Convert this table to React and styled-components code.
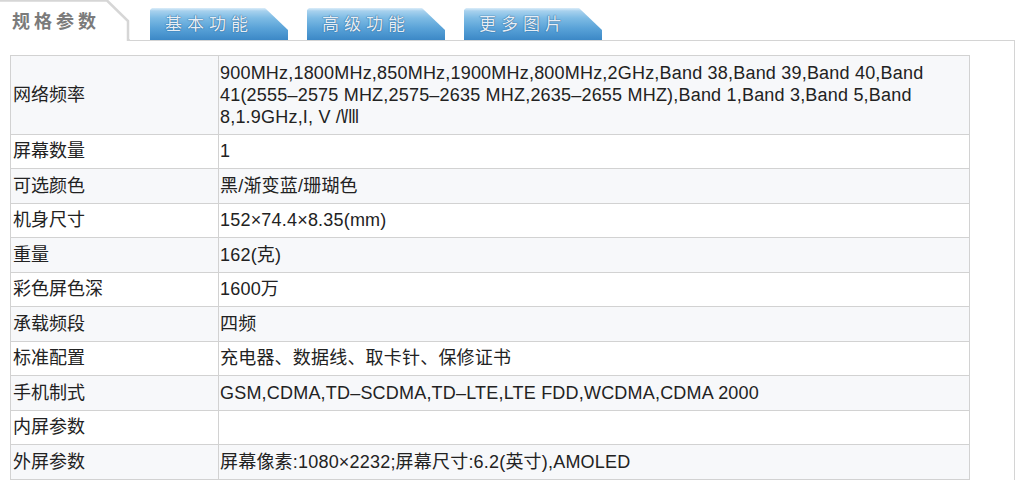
import React from "react";
import styled, { createGlobalStyle } from "styled-components";

const GlobalStyle = createGlobalStyle`
  body {
    margin: 0;
    background: #fff;
    font-family: "Liberation Sans", "Noto Sans CJK SC", sans-serif;
    color: #222;
  }
`;

const Page = styled.div`
  width: 1015px;
`;

const TabBar = styled.div`
  display: flex;
  align-items: flex-end;
  height: 41px;
`;

const ActiveTab = styled.div`
  position: relative;
  width: 130px;
  height: 41px;
  box-sizing: border-box;
  padding: 8px 0 0 12px;
  font-size: 18px;
  font-weight: bold;
  letter-spacing: 4px;
  color: #7b7b7b;
  font-family: "Noto Sans CJK SC", sans-serif;
  line-height: 24px;
`;

const TabEdge = styled.svg`
  position: absolute;
  top: 0;
  left: 0;
`;

const TabRow = styled.div`
  flex: 1;
  display: flex;
  align-items: flex-end;
  gap: 19px;
  padding-left: 20px;
  height: 41px;
  box-sizing: border-box;
  border-bottom: 1px solid #d4d4d4;
`;

const Tab = styled.div`
  width: 138px;
  height: 32px;
  box-sizing: border-box;
  padding: 4px 0 0 15px;
  clip-path: polygon(0 2px, 2px 0, 115px 0, 138px 22px, 138px 32px, 0 32px);
  background: linear-gradient(
    to bottom,
    #dcedf9 0px,
    #a7d1ee 3px,
    #7dbbe4 10px,
    #5aa3d8 20px,
    #3c88c6 32px
  );
  font-family: "Noto Sans CJK SC", sans-serif;
  font-size: 17px;
  letter-spacing: 5px;
  line-height: 22px;
  color: #e6eef6;
  text-shadow: 0 0 1px #245f92, 0 0 1px #245f92;
`;

const Panel = styled.div`
  border-right: 1px solid #d4d4d4;
  padding: 14px 0 0 10px;
`;

const Table = styled.table`
  width: 960px;
  border-collapse: collapse;
  font-size: 18px;
  line-height: 22px;
`;

const Row = styled.tr`
  background: ${(p) => (p.$odd ? "#f7f8fa" : "#fff")};
`;

const Label = styled.td`
  width: 204px;
  border: 1px solid #d2d2d2;
  padding: 5.75px 1px 5.75px 2px;
  color: #222;
  vertical-align: middle;
`;

const Value = styled.td`
  border: 1px solid #d2d2d2;
  padding: 5.75px 1px;
  color: #222;
  letter-spacing: 0.2px;
  vertical-align: middle;
`;

const tabs = ["基本功能", "高级功能", "更多图片"];

const specs = [
  [
    "网络频率",
    "900MHz,1800MHz,850MHz,1900MHz,800MHz,2GHz,Band 38,Band 39,Band 40,Band 41(2555–2575 MHZ,2575–2635 MHZ,2635–2655 MHZ),Band 1,Band 3,Band 5,Band 8,1.9GHz,I, V /Ⅷ",
  ],
  ["屏幕数量", "1"],
  ["可选颜色", "黑/渐变蓝/珊瑚色"],
  ["机身尺寸", "152×74.4×8.35(mm)"],
  ["重量", "162(克)"],
  ["彩色屏色深", "1600万"],
  ["承载频段", "四频"],
  ["标准配置", "充电器、数据线、取卡针、保修证书"],
  ["手机制式", "GSM,CDMA,TD–SCDMA,TD–LTE,LTE FDD,WCDMA,CDMA 2000"],
  ["内屏参数", ""],
  ["外屏参数", "屏幕像素:1080×2232;屏幕尺寸:6.2(英寸),AMOLED"],
];

export default function App() {
  return (
    <Page>
      <GlobalStyle />
      <TabBar>
        <ActiveTab>
          <TabEdge width="130" height="41" viewBox="0 0 130 41">
            <polyline
              points="0,0.5 107,0.5 128,21 128,40.5 130,40.5"
              fill="none"
              stroke="#d6d6d6"
              strokeWidth="2.5"
            />
          </TabEdge>
          规格参数
        </ActiveTab>
        <TabRow>
          {tabs.map((t) => (
            <Tab key={t}>{t}</Tab>
          ))}
        </TabRow>
      </TabBar>
      <Panel>
        <Table>
          <tbody>
            {specs.map(([k, v], i) => (
              <Row key={k} $odd={i % 2 === 0}>
                <Label>{k}</Label>
                <Value>{v}</Value>
              </Row>
            ))}
          </tbody>
        </Table>
      </Panel>
    </Page>
  );
}
